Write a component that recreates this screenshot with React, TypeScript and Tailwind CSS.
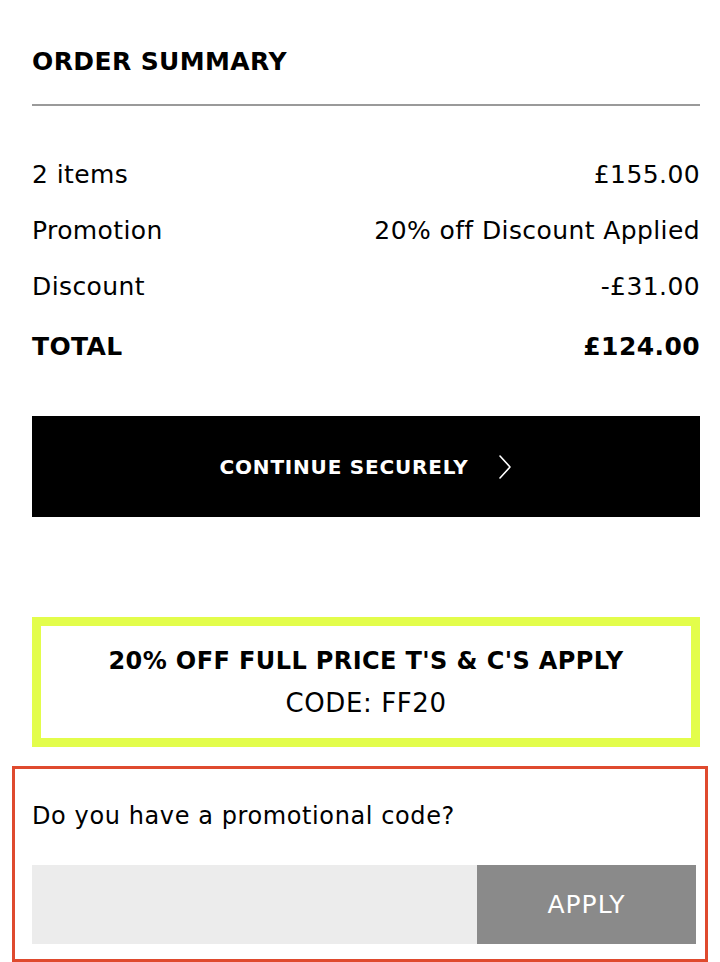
import React from 'react';

const rows = [
  { label: '2 items', value: '£155.00' },
  { label: 'Promotion', value: '20% off Discount Applied' },
  { label: 'Discount', value: '-£31.00' },
];

const ChevronRight = () => (
  <svg width="14" height="24" viewBox="0 0 14 24" fill="none" className="ml-[30px]">
    <path d="M2 1 L12 12 L2 23" stroke="white" strokeWidth="1.6" strokeLinecap="round" strokeLinejoin="round" />
  </svg>
);

const App: React.FC = () => {
  return (
    <div className="w-[720px] h-[962px] overflow-hidden bg-white text-black font-['DejaVu_Sans',sans-serif]">
      <div className="pl-[32px] pr-[20px] pt-[44px]">
        <h1 className="text-[25px] font-bold leading-[36px] tracking-[0.4px]">ORDER SUMMARY</h1>
        <div className="mt-[24px] h-[2px] bg-[#9a9a9a]" />

        <div className="mt-[53px] flex flex-col gap-[24px]">
          {rows.map((r) => (
            <div key={r.label} className="flex justify-between text-[25px] leading-[32px] tracking-[0.4px]">
              <span>{r.label}</span>
              <span>{r.value}</span>
            </div>
          ))}
          <div className="flex justify-between text-[25px] leading-[32px] tracking-[0.4px] font-bold pt-[4px]">
            <span>TOTAL</span>
            <span>£124.00</span>
          </div>
        </div>

        <button className="mt-[53px] w-full h-[101px] bg-black text-white flex items-center justify-center text-[20px] font-bold tracking-[0.8px]">
          CONTINUE SECURELY
          <ChevronRight />
        </button>

        <div className="mt-[100px] border-[9px] border-[#e3fd4b] h-[130px] flex flex-col items-center justify-center">
          <div className="text-[24px] font-bold leading-[32px] tracking-[0.4px]">20% OFF FULL PRICE T'S &amp; C'S APPLY</div>
          <div className="text-[26px] leading-[32px] mt-[10px] tracking-[0.6px]">CODE: FF20</div>
        </div>
      </div>

      <div className="mx-[12px] mt-[19px] border-[3px] border-[#df4a2e] h-[196px] pl-[17px] pr-[9px] pt-[32px]">
        <p className="text-[24px] leading-[30px] tracking-[0.6px]">Do you have a promotional code?</p>
        <div className="mt-[34px] flex h-[79px]">
          <input className="flex-1 bg-[#ececec] outline-none" />
          <button className="w-[219px] bg-[#8a8a8a] text-white text-[25px] tracking-[1px]">APPLY</button>
        </div>
      </div>
    </div>
  );
};

export default App;
